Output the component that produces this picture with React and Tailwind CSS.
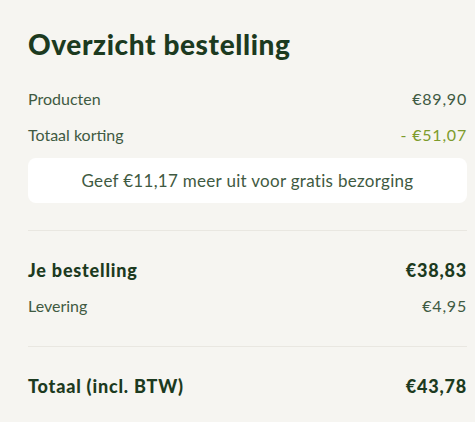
export default function App() {
  const font = { fontFamily: '"Lato", "Noto Sans", sans-serif' };
  return (
    <div className="w-[475px] h-[422px] bg-[#f6f5f1] overflow-hidden" style={font}>
      <div className="pl-[28px] pr-[8px] pt-[28px]">
        <h1 className="text-[28px] leading-[32px] font-black text-[#1c3a20] tracking-[0.6px]">Overzicht bestelling</h1>
        <div className="mt-[29px] flex flex-col gap-[16px] text-[16px] leading-[20px] text-[#3f5a42]">
          <div className="flex justify-between"><span>Producten</span><span className="tracking-[0.8px]">€89,90</span></div>
          <div className="flex justify-between"><span>Totaal korting</span><span className="text-[#7d9b2c] tracking-[0.8px]">- €51,07</span></div>
        </div>
        <div className="mt-[13px] h-[45px] rounded-[8px] bg-white flex items-center justify-center text-[17px] tracking-[0.3px] text-[#3f5a42]">
          Geef €11,17 meer uit voor gratis bezorging
        </div>
        <div className="mt-[27px] h-px bg-[#e9e7e1]" />
        <div className="mt-[29px] flex flex-col gap-[16px] text-[16px] leading-[20px] text-[#3f5a42]">
          <div className="flex justify-between text-[18px] font-black tracking-[0.8px] text-[#1c3a20]"><span>Je bestelling</span><span>€38,83</span></div>
          <div className="flex justify-between"><span>Levering</span><span className="tracking-[0.8px]">€4,95</span></div>
        </div>
        <div className="mt-[30px] h-px bg-[#e9e7e1]" />
        <div className="mt-[29px] flex justify-between text-[18px] leading-[20px] font-black tracking-[0.8px] text-[#1c3a20]">
          <span>Totaal (incl. BTW)</span><span>€43,78</span>
        </div>
      </div>
    </div>
  );
}
